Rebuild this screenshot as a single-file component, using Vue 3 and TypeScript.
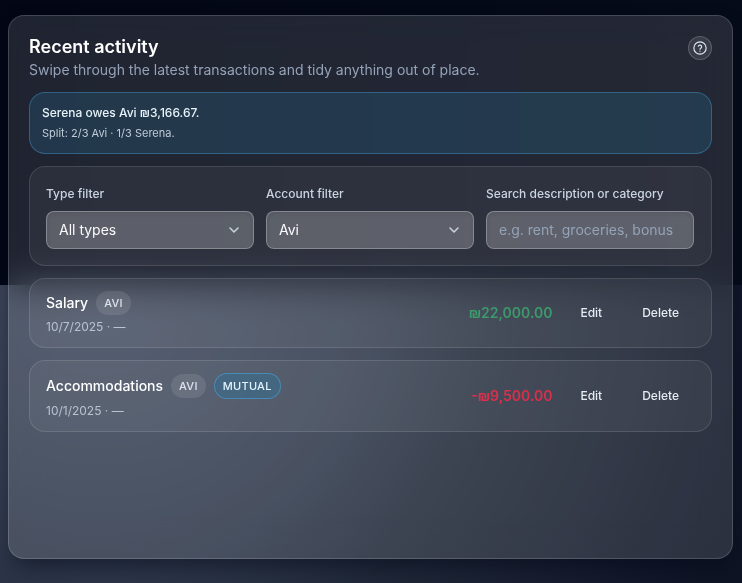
<script setup lang="ts">
import { computed, ref } from 'vue'

interface Transaction {
  id: number
  title: string
  date: string
  note: string
  owner: string
  mutual: boolean
  amount: number
}

const transactions: Transaction[] = [
  { id: 1, title: 'Salary', date: '10/7/2025', note: '—', owner: 'Avi', mutual: false, amount: 22000 },
  { id: 2, title: 'Accommodations', date: '10/1/2025', note: '—', owner: 'Avi', mutual: true, amount: -9500 },
]

const typeFilter = ref('all')
const accountFilter = ref('avi')
const search = ref('')

const visible = computed(() =>
  transactions.filter((t) => {
    const typeOk =
      typeFilter.value === 'all' || (typeFilter.value === 'income' ? t.amount > 0 : t.amount < 0)
    const accountOk = accountFilter.value === 'all' || t.owner.toLowerCase() === accountFilter.value
    return typeOk && accountOk && t.title.toLowerCase().includes(search.value.toLowerCase())
  }),
)

function money(value: number): string {
  const digits = Math.abs(value).toLocaleString('en-US', { minimumFractionDigits: 2 })
  return `${value < 0 ? '-' : ''}₪${digits}`
}
</script>

<template>
  <main class="page">
    <section class="card">
      <header class="header">
        <div class="heading">
          <h2>Recent activity</h2>
          <p>Swipe through the latest transactions and tidy anything out of place.</p>
        </div>
        <button type="button" class="help" aria-label="Help">
          <svg viewBox="0 0 24 24" width="14" height="14" aria-hidden="true">
            <circle cx="12" cy="12" r="10.5" />
            <path d="M9.1 9a3 3 0 0 1 5.8 1c0 2-2.9 2.6-2.9 4" />
            <path d="M12 17.4h.01" />
          </svg>
        </button>
      </header>

      <div class="banner">
        <p class="owed">Serena owes Avi ₪3,166.67.</p>
        <p class="split">Split: 2/3 Avi · 1/3 Serena.</p>
      </div>

      <form class="filters" @submit.prevent>
        <div class="field">
          <label for="type-filter">Type filter</label>
          <div class="control">
            <select id="type-filter" v-model="typeFilter">
              <option value="all">All types</option>
              <option value="income">Income</option>
              <option value="expense">Expense</option>
            </select>
            <svg class="chevron" viewBox="0 0 16 16" aria-hidden="true"><path d="M4 6l4 4 4-4" /></svg>
          </div>
        </div>
        <div class="field">
          <label for="account-filter">Account filter</label>
          <div class="control">
            <select id="account-filter" v-model="accountFilter">
              <option value="all">All accounts</option>
              <option value="avi">Avi</option>
              <option value="serena">Serena</option>
            </select>
            <svg class="chevron" viewBox="0 0 16 16" aria-hidden="true"><path d="M4 6l4 4 4-4" /></svg>
          </div>
        </div>
        <div class="field">
          <label for="search">Search description or category</label>
          <div class="control">
            <input id="search" v-model="search" type="text" placeholder="e.g. rent, groceries, bonus" />
          </div>
        </div>
      </form>

      <ul class="list">
        <li v-for="t in visible" :key="t.id" class="row">
          <div class="info">
            <div class="title-line">
              <span class="title">{{ t.title }}</span>
              <span class="badge">{{ t.owner }}</span>
              <span v-if="t.mutual" class="badge mutual">Mutual</span>
            </div>
            <p class="meta">{{ t.date }} · {{ t.note }}</p>
          </div>
          <span class="amount" :class="t.amount < 0 ? 'negative' : 'positive'">{{ money(t.amount) }}</span>
          <div class="actions">
            <button type="button">Edit</button>
            <button type="button">Delete</button>
          </div>
        </li>
      </ul>
    </section>
  </main>
</template>

<style>
body {
  background: #020617;
}
</style>

<style scoped>
* {
  box-sizing: border-box;
}

h2,
p,
ul {
  margin: 0;
  padding: 0;
}

button,
select,
input {
  font: inherit;
  color: inherit;
  margin: 0;
}

.page {
  display: flex;
  min-height: 100vh;
  padding: 15px 9px 24px 8px;
  font-family: Inter, 'Liberation Sans', sans-serif;
  color: #f8fafc;
  background:
    radial-gradient(circle at 100px 0, #414b5f 0, #303a4c 270px, #202939 400px, #121829 620px, #0b1020 760px)
      0 285px no-repeat,
    linear-gradient(90deg, #020615, #060b1a);
}

.card {
  flex: 1;
  min-width: 0;
  display: flex;
  flex-direction: column;
  gap: 12px;
  padding: 20px;
  border: 1px solid rgba(255, 255, 255, 0.16);
  border-radius: 16px;
  background: rgba(255, 255, 255, 0.12);
  backdrop-filter: blur(18px);
  box-shadow: 0 12px 24px -6px rgba(2, 6, 23, 0.6);
}

.header {
  display: flex;
  align-items: flex-start;
  justify-content: space-between;
  gap: 12px;
}

.heading {
  display: flex;
  flex-direction: column;
  gap: 2px;
}

h2 {
  font-size: 18px;
  line-height: 22px;
  font-weight: 600;
  color: #ffffff;
}

.heading p {
  font-size: 14px;
  line-height: 20px;
  color: #94a3b8;
}

.help {
  display: flex;
  align-items: center;
  justify-content: center;
  width: 24px;
  height: 24px;
  padding: 0;
  border: 1px solid rgba(255, 255, 255, 0.18);
  border-radius: 50%;
  background: rgba(255, 255, 255, 0.1);
  color: #e2e8f0;
}

.help svg {
  fill: none;
  stroke: currentColor;
  stroke-width: 2;
  stroke-linecap: round;
  stroke-linejoin: round;
}

.banner {
  display: flex;
  flex-direction: column;
  gap: 4px;
  padding: 12px;
  border: 1px solid rgba(72, 164, 220, 0.4);
  border-radius: 16px;
  background: rgba(44, 137, 185, 0.19);
  line-height: 16px;
}

.owed {
  font-size: 12px;
  font-weight: 500;
  color: #e8f3fa;
}

.split {
  font-size: 11px;
  color: #bfcbd8;
}

.filters {
  display: grid;
  grid-template-columns: repeat(3, minmax(0, 1fr));
  gap: 12px;
  padding: 16px 17px 16px 16px;
  border: 1px solid rgba(255, 255, 255, 0.12);
  border-radius: 16px;
  background: rgba(255, 255, 255, 0.05);
}

.field {
  display: flex;
  flex-direction: column;
  gap: 6px;
}

.field label {
  font-size: 12px;
  line-height: 22px;
  font-weight: 500;
  color: #cbd5e1;
}

.control {
  display: grid;
  align-items: center;
}

.control > * {
  grid-area: 1 / 1;
}

select,
input {
  width: 100%;
  height: 38px;
  padding: 0 12px 2px;
  border: 1px solid rgba(255, 255, 255, 0.26);
  border-radius: 8px;
  appearance: none;
  background: rgba(255, 255, 255, 0.23);
  box-shadow: inset 0 2px 4px rgba(0, 0, 0, 0.08);
  font-size: 14px;
  outline: none;
}

option {
  color: #0f172a;
}

input::placeholder {
  color: #94a3b8;
  opacity: 1;
}

.chevron {
  justify-self: end;
  width: 16px;
  height: 16px;
  margin-right: 12px;
  fill: none;
  stroke: #cbd5e1;
  stroke-width: 1.5;
  stroke-linecap: round;
  stroke-linejoin: round;
  pointer-events: none;
}

.list {
  display: flex;
  flex-direction: column;
  gap: 12px;
  list-style: none;
}

.row {
  display: flex;
  align-items: center;
  gap: 12px;
  padding: 12px 16px;
  border: 1px solid rgba(255, 255, 255, 0.12);
  border-radius: 16px;
  background: rgba(255, 255, 255, 0.05);
}

.info {
  flex: 1;
  min-width: 0;
  display: flex;
  flex-direction: column;
  gap: 4px;
}

.title-line {
  display: flex;
  align-items: center;
  gap: 8px;
}

.title {
  font-size: 14px;
  line-height: 20px;
  font-weight: 500;
  color: #ffffff;
}

.badge {
  padding: 4px 8px;
  border-radius: 999px;
  background: rgba(255, 255, 255, 0.1);
  font-size: 11px;
  line-height: 16px;
  font-weight: 500;
  letter-spacing: 0.025em;
  text-transform: uppercase;
  color: #dde3ec;
}

.mutual {
  border: 1px solid rgba(72, 164, 220, 0.6);
  background: rgba(44, 115, 155, 0.4);
  color: #e0f2fe;
}

.meta {
  font-size: 12px;
  line-height: 16px;
  color: #b9c2d0;
}

.amount {
  font-size: 14px;
  line-height: 20px;
  font-weight: 600;
}

.positive {
  color: #3c9a6b;
}

.negative {
  color: #dc2f4b;
}

.actions {
  display: flex;
  gap: 8px;
}

.actions button {
  height: 32px;
  padding: 0 16px 2px;
  border: 0;
  border-radius: 8px;
  background: transparent;
  font-size: 12px;
  font-weight: 500;
  color: #e6ebf2;
}
</style>
